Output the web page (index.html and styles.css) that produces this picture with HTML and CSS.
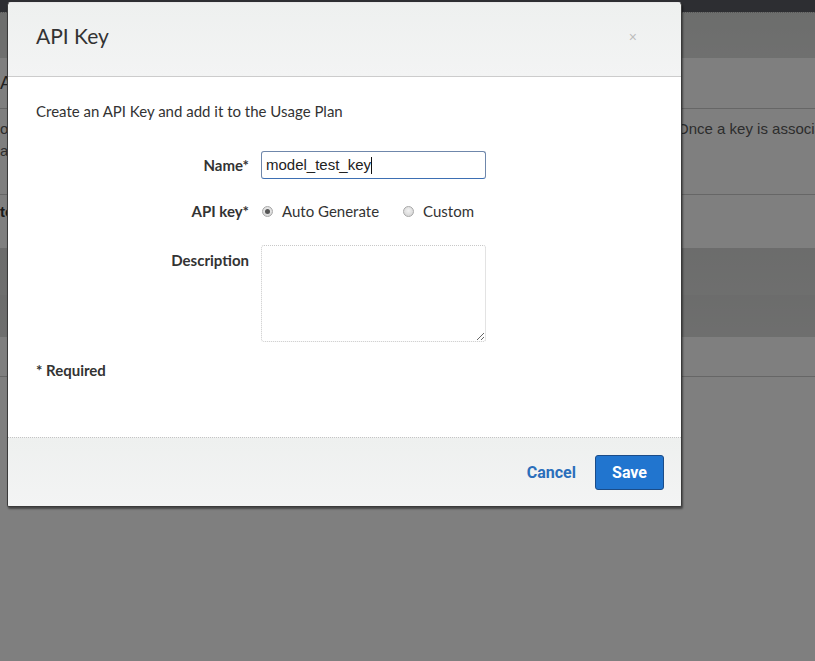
FILE: index.html
```html
<!DOCTYPE html>
<html lang="en">
<head>
<meta charset="utf-8">
<title>API Key</title>
<link rel="stylesheet" href="styles.css">
</head>
<body>
<div class="page">
  <div class="topbar"></div>
  <div class="section-head"></div>
  <div class="title-row">API Keys</div>
  <div class="desc">
    <p class="desc-line">ociate API keys with this usage plan so that customers can call methods of your deployed API stages. Once a key is associated</p>
    <p class="desc-line">applied to all requests.</p>
    <div class="desc-rule"></div>
    <div class="desc-sub">to the usage plan</div>
  </div>
  <div class="table-head"></div>
  <div class="table-sub"></div>
  <div class="table-row"></div>
</div>
<div class="overlay"></div>

<div class="modal">
  <div class="modal-header">
    <h2 class="modal-title">API Key</h2>
    <span class="modal-close">&times;</span>
  </div>
  <div class="modal-body">
    <p class="intro">Create an API Key and add it to the Usage Plan</p>
    <div class="form">
      <div class="label label-name">Name*</div>
      <div class="text-input">model_test_key<span class="caret"></span></div>

      <div class="label label-radio">API key*</div>
      <div class="radio-group">
        <span class="radio radio-checked"></span>
        <span class="radio-text">Auto Generate</span>
        <span class="radio radio-custom"></span>
        <span class="radio-text">Custom</span>
      </div>

      <div class="label label-desc">Description</div>
      <textarea class="text-area"></textarea>
    </div>
    <p class="required">* Required</p>
  </div>
  <div class="modal-footer">
    <span class="btn-cancel">Cancel</span>
    <span class="btn-save">Save</span>
  </div>
</div>
</body>
</html>
```

FILE: styles.css
```css
html, body {
  margin: 0;
  padding: 0;
}

body {
  width: 815px;
  height: 661px;
  overflow: hidden;
  font-family: Lato, "Open Sans", sans-serif;
  background: #ffffff;
  position: relative;
}

/* ---------- underlying page (dimmed by overlay) ---------- */
.page {
  background: #ffffff;
  height: 661px;
  overflow: hidden;
}

.topbar {
  height: 12px;
  background: #5a5c64;
}

.section-head {
  height: 45px;
  border-top: 1px dotted #aaaaaa;
  background: linear-gradient(#d9dbd9, #dfe0df);
}

.title-row {
  height: 50px;
  border-bottom: 1px solid #cccccc;
  font-family: "Liberation Sans", Arial, sans-serif;
  font-size: 18px;
  line-height: 50px;
  color: #444444;
}

.desc {
  height: 139px;
  font-family: "Liberation Sans", Arial, sans-serif;
  font-size: 15px;
  color: #5a5a5a;
  overflow: hidden;
}

.desc-line {
  margin: 0;
  line-height: 22px;
  white-space: nowrap;
  overflow: hidden;
}

.desc-line:first-child {
  padding-top: 9px;
}

.desc-rule {
  margin-top: 32px;
  border-top: 1px solid #cccccc;
}

.desc-sub {
  padding-top: 6px;
  font-weight: bold;
  color: #333333;
  line-height: 22px;
}

.table-head {
  height: 47px;
  background: linear-gradient(#d8d9d8, #dddedd);
}

.table-sub {
  height: 42px;
  background: linear-gradient(#d8d9d8, #dddedd);
}

.table-row {
  height: 39px;
  border-bottom: 1px solid #cccccc;
}

.overlay {
  position: absolute;
  inset: 0;
  background: rgba(0, 0, 0, 0.5);
}

/* ---------- modal ---------- */
.modal {
  position: absolute;
  left: 7px;
  top: 2px;
  width: 673px;
  background: #ffffff;
  border: 1px solid #3a3a3a;
  border-top-color: #e8e8e8;
  border-radius: 4px 4px 2px 2px;
  box-shadow: 1px 2px 2px rgba(0, 0, 0, 0.45);
  color: #333333;
}

.modal-header {
  height: 73px;
  display: flex;
  justify-content: space-between;
  align-items: flex-start;
  padding: 0 44px 0 28px;
  background: linear-gradient(#eef0ef, #f3f4f4);
  border-bottom: 1px solid #cccccc;
  border-radius: 4px 4px 0 0;
}

.modal-title {
  margin: 21px 0 0;
  font-size: 21px;
  font-weight: 400;
  line-height: 24px;
  color: #333333;
}

.modal-close {
  margin-top: 24px;
  font-family: "Liberation Sans", Arial, sans-serif;
  font-size: 14px;
  line-height: 20px;
  color: #bdbdbd;
}

.modal-body {
  padding: 25px 28px 58px;
}

.intro {
  margin: 0;
  font-size: 15px;
  line-height: 18px;
  color: #333333;
}

.form {
  margin-top: 31px;
  display: grid;
  grid-template-columns: 213px 225px;
  column-gap: 12px;
  row-gap: 18px;
}

.label {
  text-align: right;
  font-size: 15px;
  font-weight: 700;
  color: #333333;
}

.label-name {
  line-height: 28px;
}

.label-radio {
  line-height: 28px;
}

.label-desc {
  line-height: 18px;
  padding-top: 6px;
}

.text-input {
  box-sizing: border-box;
  height: 28px;
  border: 1px solid #6f87ab;
  border-bottom-color: #3d6fb3;
  border-radius: 3px;
  padding: 0 4px;
  font-family: "Liberation Sans", Arial, sans-serif;
  font-size: 15px;
  line-height: 26px;
  color: #222222;
  display: flex;
  align-items: center;
}

.caret {
  display: inline-block;
  width: 1px;
  height: 17px;
  background: #111111;
}

.radio-group {
  height: 28px;
  margin-bottom: 2px;
  display: flex;
  align-items: center;
  font-size: 15px;
  color: #333333;
}

.radio {
  box-sizing: border-box;
  width: 11px;
  height: 11px;
  border-radius: 50%;
  border: 1px solid #a8a8a8;
  background: radial-gradient(circle at 50% 40%, #f2f2f2, #cfcfcf);
  margin-left: 1px;
  margin-right: 9px;
  position: relative;
}

.radio-checked::after {
  content: "";
  position: absolute;
  left: 2px;
  top: 2px;
  width: 5px;
  height: 5px;
  border-radius: 50%;
  background: #555555;
}

.radio-custom {
  margin-left: 24px;
  margin-right: 9px;
}

.text-area {
  box-sizing: border-box;
  display: block;
  width: 225px;
  height: 97px;
  margin: 0;
  border: 1px dotted #c8c8c8;
  border-radius: 3px;
  background: #ffffff;
  resize: both;
  font-family: inherit;
}

.required {
  margin: 19px 0 0;
  font-size: 15px;
  font-weight: 700;
  line-height: 18px;
  color: #333333;
}

.modal-footer {
  height: 68px;
  border-top: 1px dotted #c4c4c4;
  background: linear-gradient(#eef0ef, #f3f4f4);
  display: flex;
  justify-content: flex-end;
  align-items: center;
  padding-right: 17px;
  border-radius: 0 0 2px 2px;
}

.btn-cancel {
  font-family: Roboto, "Liberation Sans", sans-serif;
  font-size: 16px;
  font-weight: 700;
  color: #2b6fbb;
  margin-right: 19px;
}

.btn-save {
  box-sizing: border-box;
  width: 69px;
  height: 35px;
  display: flex;
  align-items: center;
  justify-content: center;
  background: #2175cf;
  border: 1px solid #1b4c88;
  border-radius: 3px;
  font-family: Roboto, "Liberation Sans", sans-serif;
  font-size: 16px;
  font-weight: 700;
  color: #ffffff;
}
```
